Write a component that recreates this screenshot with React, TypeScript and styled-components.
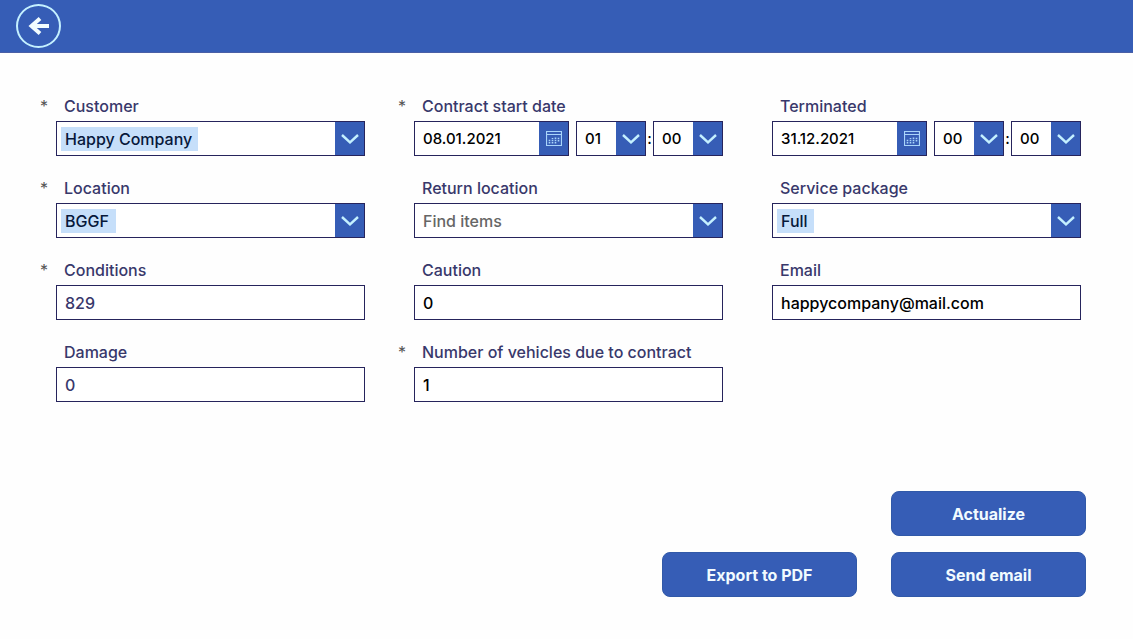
import React from "react";
import styled, { createGlobalStyle, css } from "styled-components";

const blue = "#365db6";
const navy = "#26245c";
const ice = "#c4f0ff";

const GlobalStyle = createGlobalStyle`
  *, *::before, *::after { box-sizing: border-box; }
  body {
    margin: 0;
    background: #fefefe;
    color: #000;
    font-family: Inter, "Open Sans", "Liberation Sans", sans-serif;
    font-size: 16px;
    font-weight: 500;
  }
  input, select, button { font: inherit; }
`;

const Header = styled.header`
  display: flex;
  align-items: center;
  height: 53px;
  padding: 0 16px;
  background: ${blue};
  border-bottom: 1px solid #4a5fa6;
`;

const BackButton = styled.button`
  display: flex;
  align-items: center;
  justify-content: center;
  width: 45px;
  height: 44px;
  padding: 0;
  border: 2px solid ${ice};
  border-radius: 50%;
  background: transparent;
  cursor: pointer;
`;

const Page = styled.form`
  padding: 43px 52px 42px 56px;
`;

const Fields = styled.div`
  display: grid;
  grid-template-columns: repeat(3, minmax(0, 1fr));
  gap: 22px 49px;
`;

const FieldBlock = styled.div`
  display: flex;
  flex-direction: column;
  gap: 5px;
  min-width: 0;
`;

const Label = styled.label`
  display: flex;
  margin-left: -16px;
  line-height: 20px;
  color: #38386b;
  white-space: nowrap;
`;

const Star = styled.span`
  width: 24px;
  color: #555;
  font-weight: 400;
`;

const Box = styled.div<{ $grow?: boolean }>`
  display: flex;
  height: 35px;
  border: 1px solid ${navy};
  background: #fff;
  ${(p) =>
    p.$grow !== undefined &&
    css`
      flex: ${p.$grow ? "1 1 0" : "0 0 70px"};
      min-width: 0;
    `}
`;

const controlBase = css`
  flex: 1;
  min-width: 0;
  width: 100%;
  height: 100%;
  padding: 0 8px;
  border: 0;
  background: transparent;
  &:focus-visible { outline: 2px solid ${blue}; }
`;

const TextInput = styled.input<{ $soft?: boolean }>`
  ${controlBase}
  color: ${(p) => (p.$soft ? "#38386b" : "#000")};
`;

const Picker = styled.div`
  display: grid;
  grid-template-columns: minmax(0, 1fr) 29px;
  width: 100%;
`;

const Select = styled.select<{ $mark?: number; $empty?: boolean }>`
  ${controlBase}
  grid-area: 1 / 1 / 2 / 3;
  appearance: none;
  color: ${(p) => (p.$empty ? "#666" : p.$mark ? "#07183a" : "#000")};
  ${(p) =>
    p.$mark &&
    css`
      background: linear-gradient(#c6dffa, #c6dffa) 4px center / ${p.$mark}px 24px no-repeat;
    `}
`;

const Cap = styled.span`
  grid-area: 1 / 2 / 2 / 3;
  display: flex;
  align-items: center;
  justify-content: center;
  background: ${blue};
  pointer-events: none;
`;

const DateButton = styled.button`
  display: flex;
  flex: 0 0 29px;
  align-items: center;
  justify-content: center;
  padding: 0;
  border: 0;
  background: ${blue};
  cursor: pointer;
`;

const DateRow = styled.div`
  display: flex;
  font-size: 15px;
`;

const Separator = styled.span`
  flex: 0 0 7px;
  line-height: 35px;
  text-align: center;
`;

const Actions = styled.div`
  display: grid;
  grid-template-columns: repeat(2, 195px);
  grid-auto-rows: 45px;
  justify-content: end;
  gap: 16px 34px;
  margin: 89px -5px 0 0;
`;

const ActionButton = styled.button<{ $last?: boolean }>`
  ${(p) => p.$last && "grid-column: 2;"}
  border: 1px solid #3159a8;
  border-radius: 8px;
  background: ${blue};
  color: #f1fbff;
  font-weight: 700;
  cursor: pointer;
`;

const Chevron = () => (
  <svg width="18" height="10" viewBox="0 0 18 10" fill="none" stroke={ice} strokeWidth="2.4" aria-hidden="true">
    <path d="M1 1l8 7.4L17 1" />
  </svg>
);

const Calendar = () => (
  <svg width="16" height="15" viewBox="0 0 16 15" fill="none" stroke="#a9d4fa" aria-hidden="true">
    <path d="M.5 .5h15v14H.5zM.5 3.500h15" strokeWidth="1.2" />
    <path d="M3.500 12.500v-4M6.500 12.500V7M9.500 12.500V6M12.500 10.500V6" strokeWidth="1.6" strokeDasharray="1.600 .6" />
  </svg>
);

const BackArrow = () => (
  <svg width="22" height="18" viewBox="0 0 22 18" fill="none" stroke="#f2fdff" aria-hidden="true">
    <path d="M3 9h18" strokeWidth="4" />
    <path d="M12 1.500L3.500 9l8.500 7.500" strokeWidth="4" />
  </svg>
);

type FieldProps = { id: string; label: string; required?: boolean; children: React.ReactNode };

const Field = ({ id, label, required, children }: FieldProps) => (
  <FieldBlock>
    <Label htmlFor={id}>
      <Star>{required ? "*" : ""}</Star>
      {label}
    </Label>
    {children}
  </FieldBlock>
);

type DropdownProps = { id?: string; name?: string; value: string; mark?: number; empty?: boolean };

const Dropdown = ({ id, name, value, mark, empty }: DropdownProps) => (
  <Picker>
    <Select id={id} aria-label={name} defaultValue={value} $mark={mark} $empty={empty}>
      <option>{value}</option>
    </Select>
    <Cap>
      <Chevron />
    </Cap>
  </Picker>
);

const DateTime = ({ id, date, hour, minute }: { id: string; date: string; hour: string; minute: string }) => (
  <DateRow>
    <Box $grow>
      <TextInput id={id} defaultValue={date} />
      <DateButton type="button" aria-label="Open calendar">
        <Calendar />
      </DateButton>
    </Box>
    <Separator />
    <Box $grow={false}>
      <Dropdown name="Hour" value={hour} />
    </Box>
    <Separator>:</Separator>
    <Box $grow={false}>
      <Dropdown name="Minute" value={minute} />
    </Box>
  </DateRow>
);

export default function App() {
  return (
    <>
      <GlobalStyle />
      <Header>
        <BackButton type="button" aria-label="Back">
          <BackArrow />
        </BackButton>
      </Header>
      <Page onSubmit={(e) => e.preventDefault()}>
        <Fields>
          <Field id="customer" label="Customer" required>
            <Box><Dropdown id="customer" value="Happy Company" mark={137} /></Box>
          </Field>
          <Field id="start" label="Contract start date" required>
            <DateTime id="start" date="08.01.2021" hour="01" minute="00" />
          </Field>
          <Field id="end" label="Terminated">
            <DateTime id="end" date="31.12.2021" hour="00" minute="00" />
          </Field>
          <Field id="location" label="Location" required>
            <Box><Dropdown id="location" value="BGGF" mark={55} /></Box>
          </Field>
          <Field id="return" label="Return location">
            <Box><Dropdown id="return" value="Find items" empty /></Box>
          </Field>
          <Field id="package" label="Service package">
            <Box><Dropdown id="package" value="Full" mark={37} /></Box>
          </Field>
          <Field id="conditions" label="Conditions" required>
            <Box><TextInput id="conditions" defaultValue="829" $soft /></Box>
          </Field>
          <Field id="caution" label="Caution">
            <Box><TextInput id="caution" defaultValue="0" /></Box>
          </Field>
          <Field id="email" label="Email">
            <Box><TextInput id="email" type="email" defaultValue="happycompany@mail.com" /></Box>
          </Field>
          <Field id="damage" label="Damage">
            <Box><TextInput id="damage" defaultValue="0" $soft /></Box>
          </Field>
          <Field id="vehicles" label="Number of vehicles due to contract" required>
            <Box><TextInput id="vehicles" defaultValue="1" /></Box>
          </Field>
        </Fields>
        <Actions>
          <ActionButton type="submit" $last>Actualize</ActionButton>
          <ActionButton type="button">Export to PDF</ActionButton>
          <ActionButton type="button">Send email</ActionButton>
        </Actions>
      </Page>
    </>
  );
}
